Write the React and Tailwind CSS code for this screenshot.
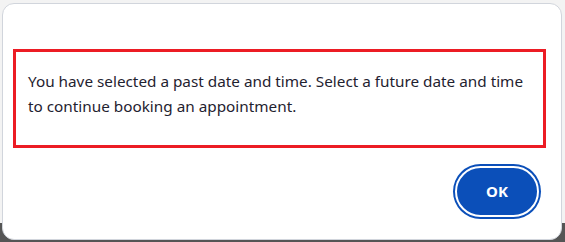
export default function App() {
  return (
    <div className="w-[565px] h-[242px] overflow-hidden bg-[linear-gradient(to_bottom,#f3f3f3_92%,#555555_92%)] font-['Noto_Sans','Open_Sans',sans-serif]">
      <div className="ml-[2px] mt-[3px] w-[560px] h-[237px] bg-white border border-gray-300 rounded-[12px] pt-[45px] pl-[10px] pr-[15px] flex flex-col">
        <div className="h-[99px] border-[3px] border-[#ec1c24] px-[12px] pt-[17px]">
          <p className="text-[15.3px] leading-[25px] text-[#1f2230]">
            You have selected a past date and time. Select a future date and time to continue booking an appointment.
          </p>
        </div>
        <button className="self-end mt-[18px] mr-[7px] w-[84px] h-[51px] rounded-full bg-[#0b4fb9] border-2 border-white ring-2 ring-[#0b4fb9] text-white text-[15px] font-bold">
          OK
        </button>
      </div>
    </div>
  )
}
